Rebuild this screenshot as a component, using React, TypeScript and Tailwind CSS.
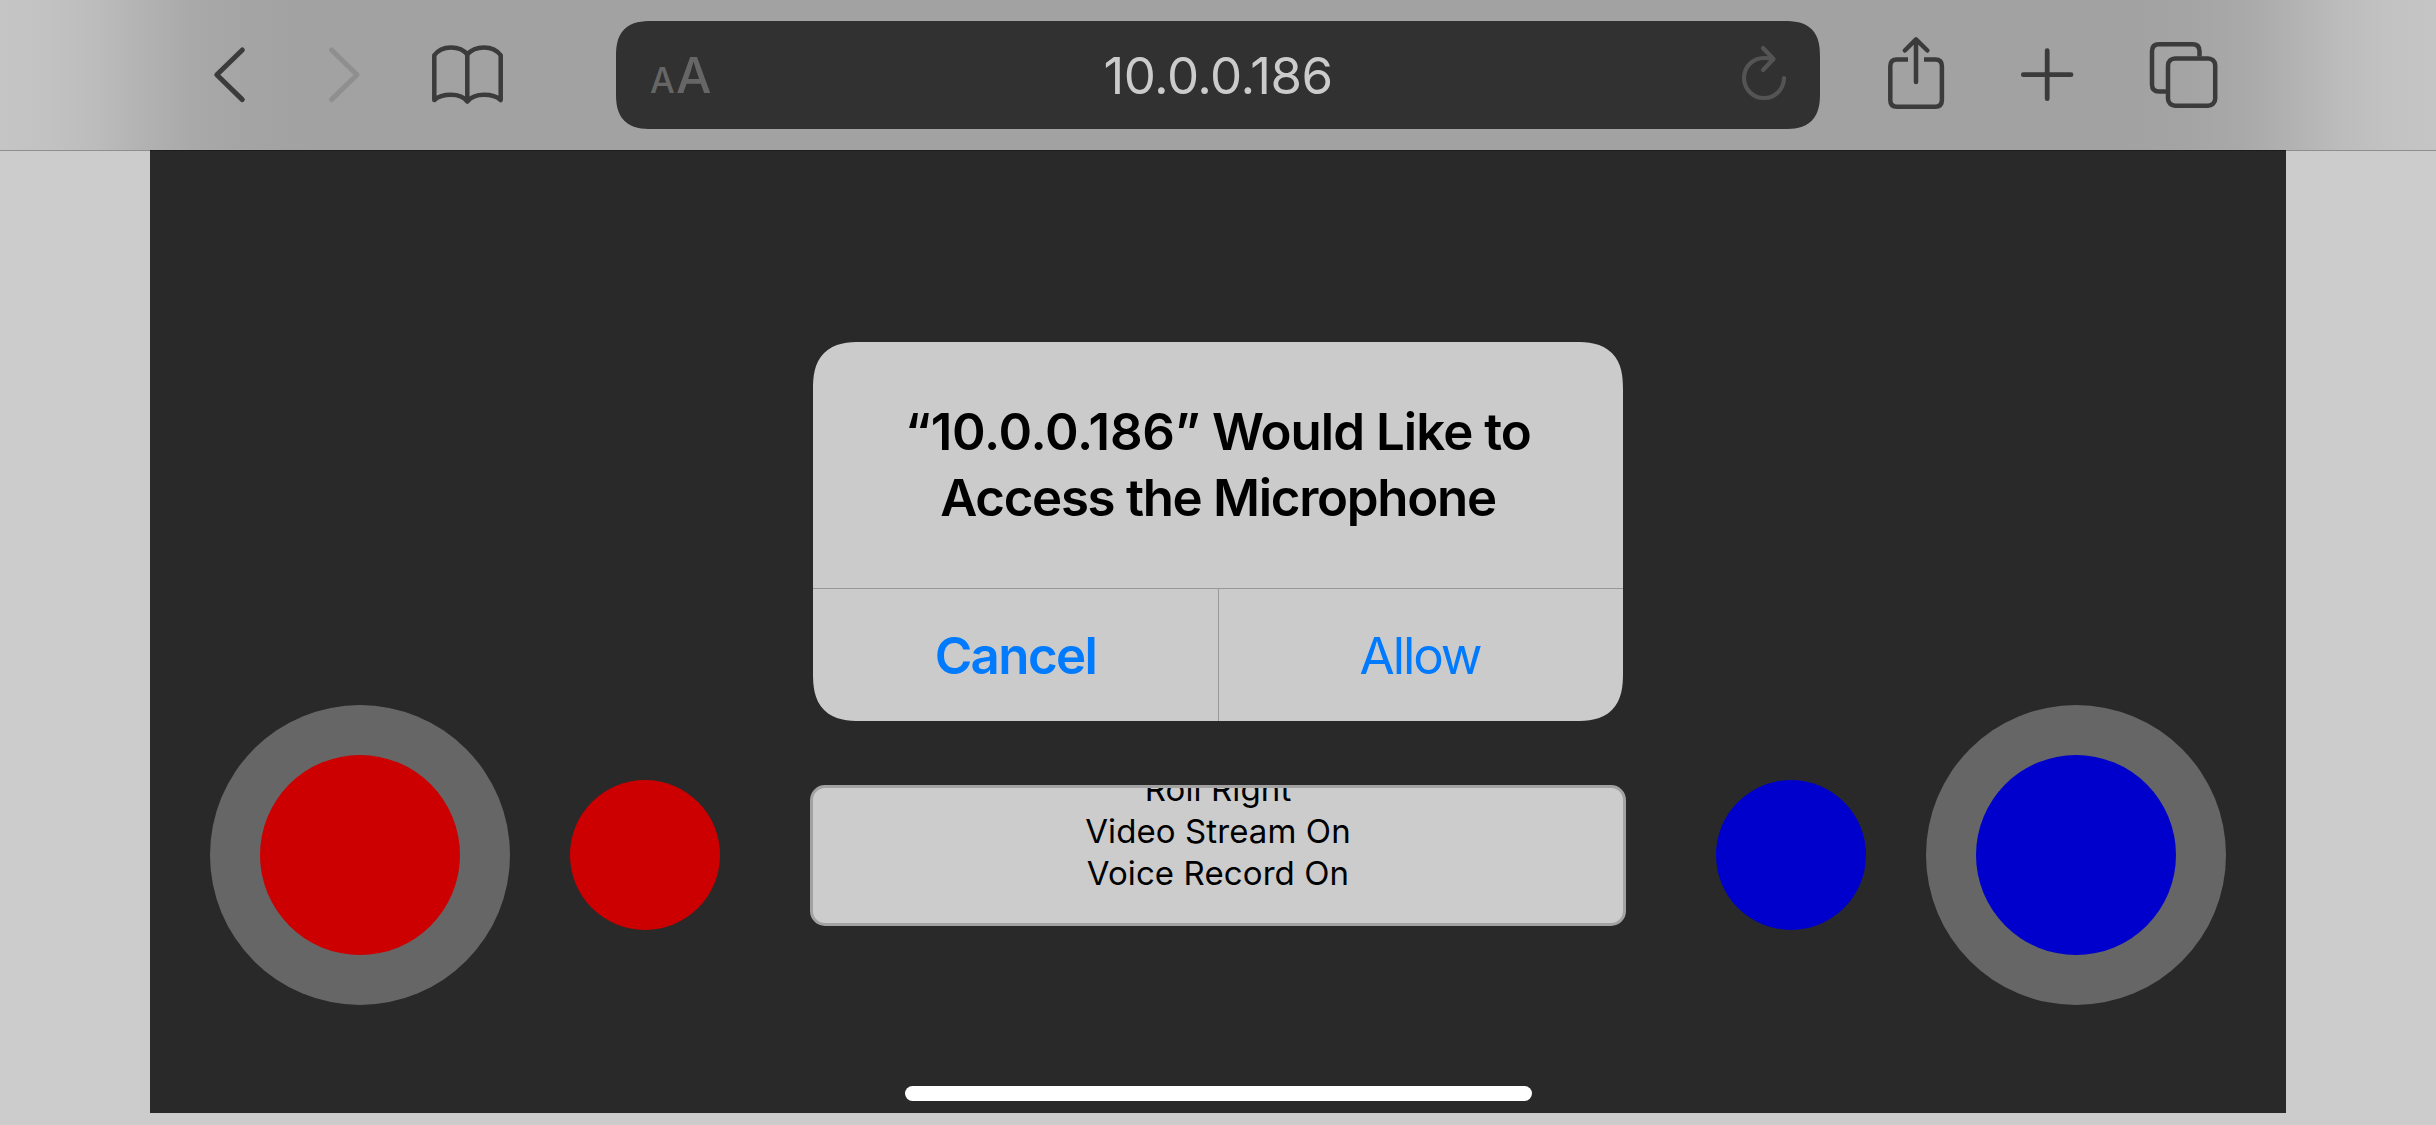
import type { ReactNode } from "react";

type IconProps = { box: string; className: string; children: ReactNode };

// Toolbar icons share one coordinate space, each showing its own slice of the bar.
function BarIcon({ box, className, children }: IconProps) {
  return (
    <svg
      viewBox={box}
      className={`h-[150px] shrink-0 ${className}`}
      fill="none"
      stroke="currentColor"
      strokeWidth={4.5}
      strokeLinecap="round"
      strokeLinejoin="round"
    >
      {children}
    </svg>
  );
}

function Toolbar() {
  return (
    <header className="relative z-10 -mb-px flex h-[151px] shrink-0 items-start border-b border-black/30 bg-[linear-gradient(90deg,#c5c5c5_0px,#c2c2c2_50px,#bcbcbc_96px,#b1b1b1_150px,#a9a9a9_192px,#a4a4a4_250px,#a2a2a2_310px,#a2a2a2_2126px,#a4a4a4_2186px,#a9a9a9_2244px,#b1b1b1_2286px,#bcbcbc_2340px,#c2c2c2_2386px,#c5c5c5_2436px)] bg-clip-padding pl-[210px] text-[#3b3b3b]">
      <BarIcon box="210 0 40 150" className="w-10">
        <path d="M242.300 50 216.800 74.800 242.300 99.600" strokeWidth={5} />
      </BarIcon>
      <BarIcon box="325 0 40 150" className="ml-[75px] w-10 text-[#8f8f8f]">
        <path d="M331.500 50 357 74.800 331.500 99.600" strokeWidth={5} />
      </BarIcon>
      <BarIcon box="428 0 80 150" className="ml-[63px] w-20">
        <path d="M467.3 54.5C464 50 458 47.4 451 47.4S438 50 434.3 55.3V100C438 96.600 444 94.800 451 94.800S464 97 467.300 101.500C471 97 477 94.800 484 94.800S497 96.600 500.700 100V55.300C497 50 491 47.400 484 47.400S471 50 467.300 54.500V101.500" />
      </BarIcon>

      <div className="mt-[21px] ml-[108px] flex h-[108px] w-[1204px] shrink-0 items-center rounded-[29px] bg-[#313131] supports-[corner-shape:squircle]:rounded-[36px] supports-[corner-shape:squircle]:[corner-shape:superellipse(1.4)]">
        <div className="flex w-[200px] items-baseline pt-[5px] pl-[34px] font-medium text-[#666666]">
          <span className="w-[26px] text-[35px] leading-[66px]">A</span>
          <span className="text-[50px] leading-[66px]">A</span>
        </div>
        <div className="flex-1 pt-[2px] text-center text-[51px] leading-[66px] tracking-[-0.53px] text-[#cbcbcb]">
          10.0.0.186
        </div>
        <div className="flex w-[200px] justify-end pr-[30px] text-[#545454]">
          <svg
            viewBox="1738 42 52 66"
            className="h-[66px] w-[52px]"
            fill="none"
            stroke="currentColor"
            strokeWidth={4.2}
            strokeLinecap="round"
            strokeLinejoin="round"
          >
            <path d="M1784 78A20 20 0 1 1 1764 58Q1769 58 1773 59" />
            <path d="M1763 48 1773.500 59 1763 70" />
          </svg>
        </div>
      </div>

      <BarIcon box="1884 0 64 150" className="ml-16 w-16">
        <path d="M1908 59.500H1897Q1890.300 59.500 1890.300 66.200V100Q1890.300 106.700 1897 106.700H1935.200Q1941.900 106.700 1941.900 100V66.200Q1941.900 59.500 1935.200 59.500H1924" strokeLinecap="butt" />
        <path d="M1916 39.500V82M1904.800 50.500 1916 39.300 1927.400 50.500" />
      </BarIcon>
      <BarIcon box="2020 0 56 150" className="ml-[72px] w-14">
        <path d="M2023.300 74.700H2071M2047.200 50.700V98.700" strokeWidth={4.8} />
      </BarIcon>
      <BarIcon box="2148 0 72 150" className="ml-[72px] w-[72px]">
        <rect x="2168" y="58.400" width="47.200" height="47.300" rx="7" />
        <path d="M2199.500 56.500V51.300Q2199.500 44.300 2192.500 44.300H2159Q2152 44.300 2152 51.300V84.500Q2152 91.500 2159 91.500H2166" strokeLinecap="butt" />
      </BarIcon>
    </header>
  );
}

function Joystick({ color }: { color: string }) {
  return (
    <div className="flex size-[300px] shrink-0 items-center justify-center rounded-full bg-[#666666]">
      <div className={`size-[200px] rounded-full ${color}`} />
    </div>
  );
}

function RoundButton({ color }: { color: string }) {
  return <button className={`size-[150px] shrink-0 rounded-full ${color}`} />;
}

function ControlPage() {
  return (
    <main className="mx-[150px] flex h-[963px] shrink-0 flex-col justify-end bg-[#292929] px-[60px] pb-[108px]">
      <div className="flex items-center">
        <Joystick color="bg-[#cc0000]" />
        <div className="ml-[60px] flex">
          <RoundButton color="bg-[#cc0000]" />
        </div>
        {/* The log stays scrolled to its newest line, so the oldest one is clipped. */}
        <div className="mx-[90px] flex h-[141px] w-[816px] shrink-0 flex-col items-center justify-end overflow-hidden rounded-[15px] border-[3px] border-[#a2a2a2] bg-[#cccccc] pb-[29px] text-[33px] leading-[42px] tracking-[0.1px] text-black">
          <p>Roll Right</p>
          <p>Video Stream On</p>
          <p>Voice Record On</p>
        </div>
        <div className="mr-[60px] flex">
          <RoundButton color="bg-[#0000cc]" />
        </div>
        <Joystick color="bg-[#0000cc]" />
      </div>
    </main>
  );
}

function PermissionAlert() {
  return (
    <div className="absolute inset-0 z-20 flex items-start justify-center pt-[342px]">
      <div
        role="alertdialog"
        className="flex h-[379px] w-[810px] flex-col overflow-hidden rounded-[39px] bg-[#cbcbcb] text-[51px] leading-[66px] supports-[corner-shape:squircle]:rounded-[48px] supports-[corner-shape:squircle]:[corner-shape:superellipse(1.4)]"
      >
        <h1 className="h-[246px] pt-[57px] text-center font-semibold text-black">
          <span className="tracking-[-0.25px]">“10.0.0.186”</span>
          <span className="tracking-[-0.95px]"> Would Like to</span>
          <br />
          <span className="tracking-[-1.3px]">Access the Microphone</span>
        </h1>
        <div className="flex flex-1 border-t border-[#989898] text-[#007aff]">
          <button className="w-[405px] pt-[2px] font-semibold tracking-[-1.59px]">Cancel</button>
          <button className="flex-1 border-l border-[#989898] pt-[2px] pr-[2px] tracking-[-2.1px]">Allow</button>
        </div>
      </div>
    </div>
  );
}

export default function App() {
  return (
    <div className="relative flex h-[1125px] w-[2436px] flex-col overflow-hidden bg-[#cccccc] font-['Inter','Liberation_Sans',sans-serif]">
      <Toolbar />
      <ControlPage />
      <PermissionAlert />
      <div className="absolute bottom-6 left-[905px] z-30 h-[15px] w-[627px] rounded-full bg-white" />
    </div>
  );
}
